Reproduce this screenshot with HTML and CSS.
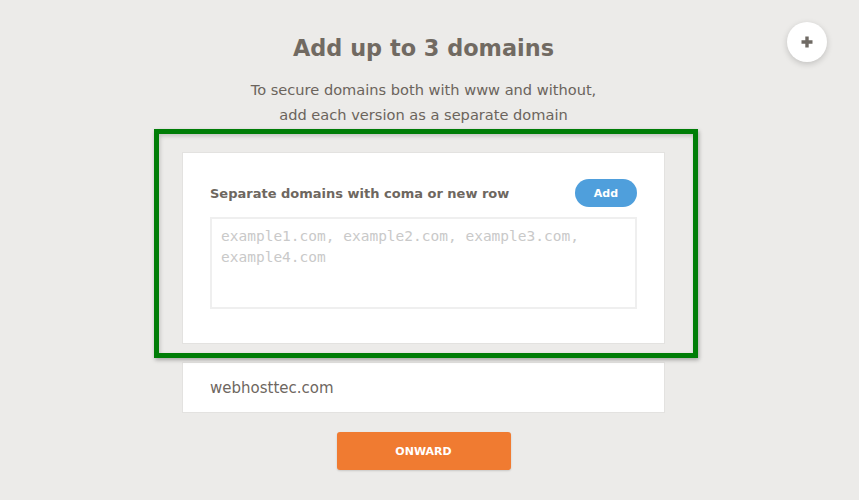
FILE: index.html
```html
<!DOCTYPE html>
<html>
<head>
<meta charset="utf-8">
<link rel="stylesheet" href="styles.css">
</head>
<body>
<button class="fab" aria-label="Add">
  <svg width="12" height="12" viewBox="0 0 12 12"><path d="M6 0.5v11M0.5 6h11" stroke="#6f6a64" stroke-width="3.4" stroke-linecap="butt"/></svg>
</button>
<main class="page">
  <h1 class="title">Add up to 3 domains</h1>
  <p class="subtitle">To secure domains both with www and without,<br>add each version as a separate domain</p>
  <section class="card entry">
    <div class="entry-head">
      <span class="label">Separate domains with coma or new row</span>
      <button class="add-btn">Add</button>
    </div>
    <textarea class="domains" placeholder="example1.com, example2.com, example3.com, example4.com"></textarea>
    <div class="highlight"></div>
  </section>
  <section class="card domain-row">webhosttec.com</section>
  <div class="actions"><button class="onward">ONWARD</button></div>
</main>
</body>
</html>
```
FILE: styles.css
```css
* { box-sizing: border-box; }
html, body { height: 100%; }
body {
  margin: 0;
  background: #ecebe9;
  font-family: "DejaVu Sans", sans-serif;
  color: #6e675f;
  padding-right: 12px;
}
.fab {
  position: absolute;
  top: 22px;
  right: 32px;
  width: 40px;
  height: 40px;
  border-radius: 50%;
  border: none;
  background: #fff;
  box-shadow: 0 2px 6px rgba(0,0,0,0.18);
  display: flex;
  align-items: center;
  justify-content: center;
  padding: 0;
}
.page {
  width: 483px;
  margin: 0 auto;
  display: flex;
  flex-direction: column;
  align-items: stretch;
}
.title {
  margin: 34px 0 0;
  font-size: 22.4px;
  line-height: 28px;
  font-weight: bold;
  text-align: center;
  color: #716a62;
}
.subtitle {
  margin: 15px 0 0;
  font-size: 14.6px;
  line-height: 25px;
  text-align: center;
  color: #6b645c;
}
.card {
  background: #fff;
  border: 1px solid #e3e2e0;
}
.entry {
  position: relative;
  margin-top: 25px;
  padding: 26px 27px 34px;
}
.entry-head {
  display: flex;
  justify-content: space-between;
  align-items: center;
  height: 28px;
}
.label {
  font-size: 13px;
  font-weight: 600;
  color: #6e675f;
}
.add-btn {
  width: 62px;
  height: 28px;
  border: none;
  border-radius: 14px;
  background: #4f9fdc;
  color: #fff;
  font-family: "DejaVu Sans", sans-serif;
  font-weight: bold;
  font-size: 11px;
  padding: 0;
}
.domains {
  display: block;
  margin-top: 10px;
  width: 100%;
  height: 92px;
  border: 2px solid #efefef;
  resize: none;
  padding: 7px 9px;
  font-family: "DejaVu Sans Mono", monospace;
  font-size: 14.5px;
  line-height: 21px;
  color: #555;
  outline: none;
}
.domains::placeholder { color: #c9c9c9; }
.highlight {
  position: absolute;
  left: -29px;
  top: -24px;
  right: -34px;
  bottom: -15px;
  border: 5px solid #007d07;
  box-shadow: 1px 2px 4px rgba(0,0,0,0.3), inset 1px 2px 4px rgba(0,0,0,0.18);
  pointer-events: none;
}
.domain-row {
  margin-top: 18px;
  height: 51px;
  padding: 0 27px;
  display: flex;
  align-items: center;
  font-size: 15px;
  color: #6e675f;
}
.actions {
  display: flex;
  justify-content: center;
  margin-top: 19px;
}
.onward {
  width: 174px;
  height: 38px;
  border: none;
  border-radius: 3px;
  background: #f07b31;
  color: #fff;
  font-family: "DejaVu Sans", sans-serif;
  font-weight: bold;
  font-size: 11px;
  box-shadow: 0 1px 2px rgba(0,0,0,0.15);
}
```
